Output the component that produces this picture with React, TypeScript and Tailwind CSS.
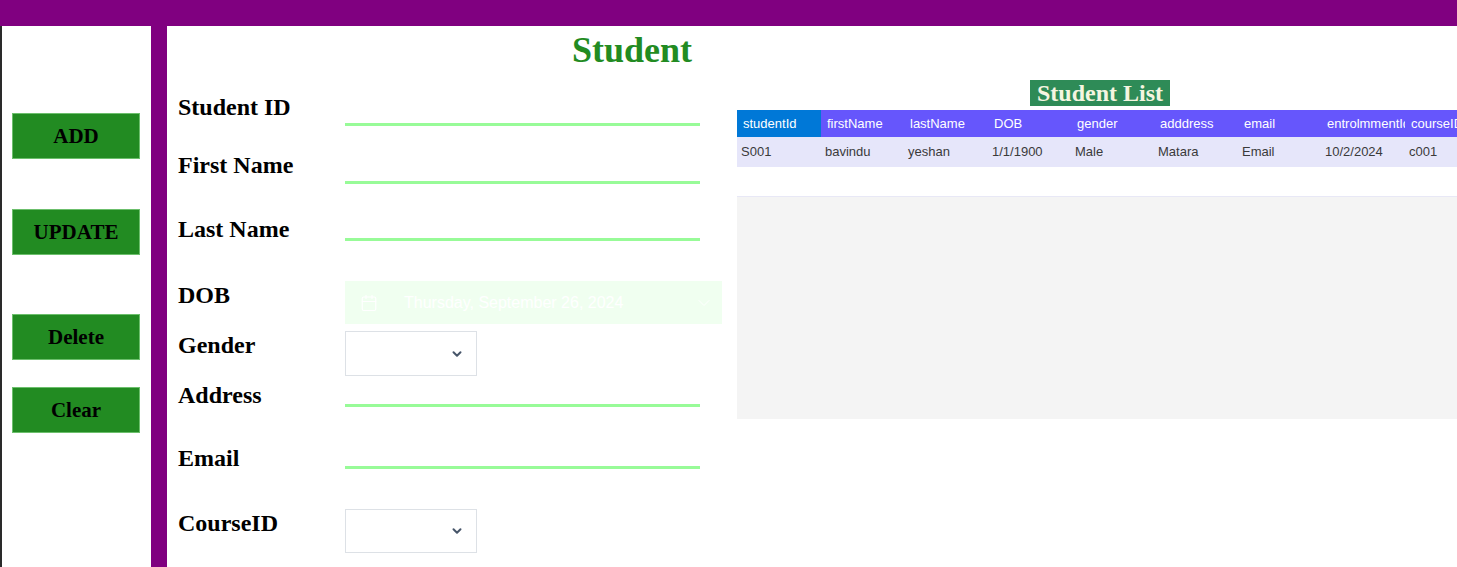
import { Calendar, ChevronDown } from 'lucide-react'

const columns = ['studentId', 'firstName', 'lastName', 'DOB', 'gender', 'adddress', 'email', 'entrolmmentId', 'courseID']
const row = ['S001', 'bavindu', 'yeshan', '1/1/1900', 'Male', 'Matara', 'Email', '10/2/2024', 'c001']

function SideButton({ label, className = '' }: { label: string; className?: string }) {
  return (
    <button className={`w-[128px] h-[46px] bg-[#228b22] border border-[#6cbf6c] text-black font-bold text-[21px] leading-none ${className}`}>
      {label}
    </button>
  )
}

function Underline({ top }: { top: string }) {
  return <div className={`w-[355px] h-[3px] bg-[#98fb98] ${top}`} />
}

function SelectBox() {
  return (
    <div className="w-[132px] h-full border border-[#dde1e6] bg-white flex items-center justify-end pr-[12px]">
      <ChevronDown size={14} strokeWidth={3.4} className="text-[#475569]" />
    </div>
  )
}

export default function App() {
  return (
    <div className="w-[1457px] h-[567px] overflow-hidden bg-white flex flex-col font-['Liberation_Serif',serif]">
      {/* top bar */}
      <div className="h-[26px] shrink-0 bg-[#800080]" />

      <div className="flex flex-1 min-h-0">
        {/* sidebar */}
        <div className="w-[151px] shrink-0 border-l-2 border-[#2a2a2a] flex flex-col items-start pl-[10px] pt-[87px]">
          <SideButton label="ADD" />
          <SideButton label="UPDATE" className="mt-[50px]" />
          <SideButton label="Delete" className="mt-[59px]" />
          <SideButton label="Clear" className="mt-[27px]" />
        </div>

        <div className="w-[16px] shrink-0 bg-[#800080]" />

        {/* form */}
        <div className="w-[570px] shrink-0 flex flex-col text-black">
          <div className="h-[48px] flex items-center pl-[405px]">
            <h1 className="text-[36px] font-bold text-[#228b22] leading-none">Student</h1>
          </div>

          <div className="h-[62px] flex">
            <div className="w-[178px] pl-[11px] pt-[21px] text-[24px] font-bold leading-[24px]">Student ID</div>
            <Underline top="mt-[49px]" />
          </div>
          <div className="h-[60px] flex">
            <div className="w-[178px] pl-[11px] pt-[17px] text-[24px] font-bold leading-[24px]">First Name</div>
            <Underline top="mt-[45px]" />
          </div>
          <div className="h-[74px] flex">
            <div className="w-[178px] pl-[11px] pt-[21px] text-[24px] font-bold leading-[24px]">Last Name</div>
            <Underline top="mt-[42px]" />
          </div>
          <div className="h-[58px] flex">
            <div className="w-[178px] pl-[11px] pt-[13px] text-[24px] font-bold leading-[24px]">DOB</div>
            <div className="mt-[11px] w-[377px] h-[43px] bg-[#f0fff0] flex items-center pl-[15px] pr-[8px] text-white font-['Liberation_Sans',sans-serif] text-[16px]">
              <Calendar size={18} strokeWidth={1.5} />
              <span className="ml-[26px] flex-1">Thursday, September 26, 2024</span>
              <ChevronDown size={20} strokeWidth={1.2} />
            </div>
          </div>
          <div className="h-[52px] flex">
            <div className="w-[178px] pl-[11px] pt-[5px] text-[24px] font-bold leading-[24px]">Gender</div>
            <div className="mt-[3px] h-[45px]">
              <SelectBox />
            </div>
          </div>
          <div className="h-[60px] flex">
            <div className="w-[178px] pl-[11px] pt-[3px] text-[24px] font-bold leading-[24px]">Address</div>
            <Underline top="mt-[24px]" />
          </div>
          <div className="h-[60px] flex">
            <div className="w-[178px] pl-[11px] pt-[6px] text-[24px] font-bold leading-[24px]">Email</div>
            <Underline top="mt-[26px]" />
          </div>
          <div className="h-[67px] flex">
            <div className="w-[178px] pl-[11px] pt-[11px] text-[24px] font-bold leading-[24px]">CourseID</div>
            <div className="mt-[9px] h-[44px]">
              <SelectBox />
            </div>
          </div>
        </div>

        {/* student list */}
        <div className="flex-1 min-w-0 flex flex-col pt-[54px]">
          <div className="flex pl-[293px]">
            <div className="flex items-center h-[26px] px-[7px] bg-[#2e8b57] text-[#f5f5e0] text-[24px] font-bold leading-none">
              Student List
            </div>
          </div>

          <div className="mt-[4px] font-['Liberation_Sans',sans-serif] text-[13px]">
            <div className="grid grid-cols-[84px_83px_84px_83px_83px_84px_83px_84px_83px] h-[27px] bg-[#6656fc] text-white">
              {columns.map((c, i) => (
                <div
                  key={c}
                  className={`flex items-center pl-[6px] overflow-hidden whitespace-nowrap ${i === 0 ? 'bg-[#0078d7]' : ''}`}
                >
                  {c}
                </div>
              ))}
            </div>
            <div className="grid grid-cols-[84px_83px_84px_83px_83px_84px_83px_84px_83px] h-[30px] bg-[#e6e6fa] text-[#3a3a3a]">
              {row.map((v, i) => (
                <div key={i} className="flex items-center pl-[4px] overflow-hidden whitespace-nowrap">
                  {v}
                </div>
              ))}
            </div>
            <div className="h-[29px] bg-white" />
            <div className="h-[223px] bg-[#f4f4f4] border-t border-[#e8e8f6]" />
          </div>
        </div>
      </div>
    </div>
  )
}
